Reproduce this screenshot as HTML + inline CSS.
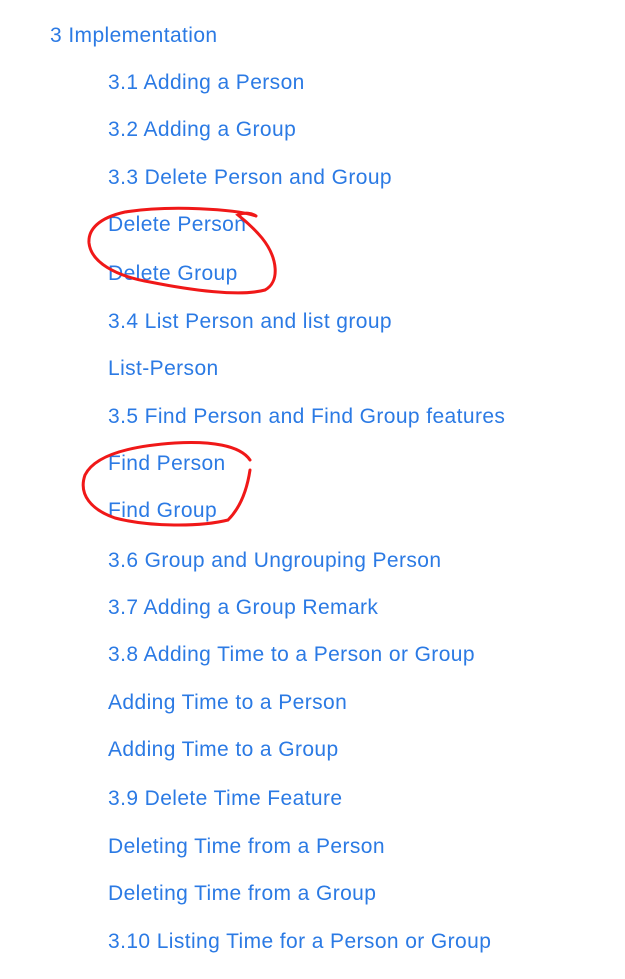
<!DOCTYPE html>
<html><head><style>
body{margin:0;width:625px;height:979px;background:#fff;position:relative;overflow:hidden;font-family:"Liberation Sans","DejaVu Sans",sans-serif;}
.t{position:absolute;font-size:21px;letter-spacing:0.4px;line-height:24px;color:#2b7ae4;white-space:nowrap;}
svg{position:absolute;left:0;top:0}
</style></head><body>
<div class="t" style="left:50px;top:24px">3 Implementation</div>
<div class="t" style="left:108px;top:71px">3.1 Adding a Person</div>
<div class="t" style="left:108px;top:118px">3.2 Adding a Group</div>
<div class="t" style="left:108px;top:166px">3.3 Delete Person and Group</div>
<div class="t" style="left:108px;top:213px">Delete Person</div>
<div class="t" style="left:108px;top:262px">Delete Group</div>
<div class="t" style="left:108px;top:310px">3.4 List Person and list group</div>
<div class="t" style="left:108px;top:357px">List-Person</div>
<div class="t" style="left:108px;top:405px">3.5 Find Person and Find Group features</div>
<div class="t" style="left:108px;top:452px">Find Person</div>
<div class="t" style="left:108px;top:499px">Find Group</div>
<div class="t" style="left:108px;top:549px">3.6 Group and Ungrouping Person</div>
<div class="t" style="left:108px;top:596px">3.7 Adding a Group Remark</div>
<div class="t" style="left:108px;top:643px">3.8 Adding Time to a Person or Group</div>
<div class="t" style="left:108px;top:691px">Adding Time to a Person</div>
<div class="t" style="left:108px;top:738px">Adding Time to a Group</div>
<div class="t" style="left:108px;top:787px">3.9 Delete Time Feature</div>
<div class="t" style="left:108px;top:835px">Deleting Time from a Person</div>
<div class="t" style="left:108px;top:882px">Deleting Time from a Group</div>
<div class="t" style="left:108px;top:930px">3.10 Listing Time for a Person or Group</div>
<svg width="625" height="979">
<path d="M256 216 C235 209 170 205 125 212 C98 218 88 230 89 243 C91 262 115 276 150 282 C190 290 240 297 265 290 C280 282 278 258 262 238 C252 226 243 219 238 215 C245 212 252 213 256 216" fill="none" stroke="#f01818" stroke-width="3" stroke-linecap="round"/>
<path d="M250 460 C240 445 210 441 175 443 C130 446 95 455 85 475 C78 495 92 510 115 518 C150 527 200 527 228 520 C240 508 247 490 250 470" fill="none" stroke="#f01818" stroke-width="3" stroke-linecap="round"/>
</svg>
</body></html>
